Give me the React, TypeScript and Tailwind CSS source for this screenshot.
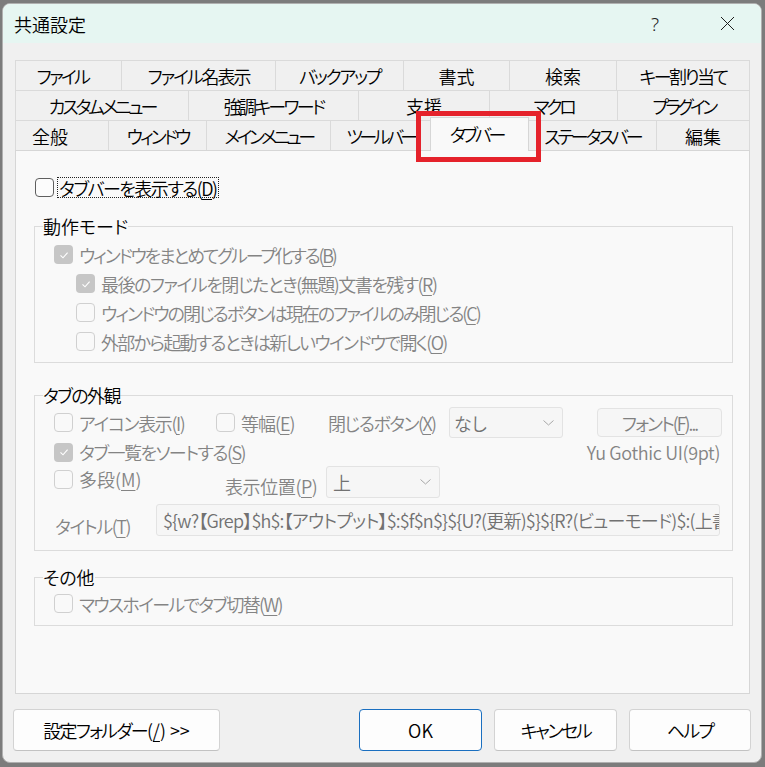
import React from "react";

const FONT =
  "font-['Noto_Sans_CJK_JP','Noto_Sans',sans-serif] [font-feature-settings:'palt'] font-[350]";

function U({ children }: { children: React.ReactNode }) {
  return <span className="underline underline-offset-[3px] decoration-1">{children}</span>;
}

function Check({ checked = false, disabled = false }: { checked?: boolean; disabled?: boolean }) {
  if (checked) {
    return (
      <span className="w-[19px] h-[19px] rounded-[4px] bg-[#c6c6c6] flex items-center justify-center shrink-0">
        <svg width="12" height="12" viewBox="0 0 12 12">
          <polyline points="2.5,6.3 5,8.8 9.6,3.6" fill="none" stroke="#ffffff" strokeWidth="1.1" />
        </svg>
      </span>
    );
  }
  return (
    <span
      className={
        disabled
          ? "w-[19px] h-[19px] rounded-[4px] border border-[#d0d0d0] shrink-0"
          : "w-[19px] h-[19px] rounded-[4px] border border-[#5f5f5f] bg-[#fcfcfc] shrink-0"
      }
    />
  );
}

function CheckRow({
  checked = false,
  children,
  className = "",
  tr = "",
}: {
  checked?: boolean;
  children: React.ReactNode;
  className?: string;
  tr?: string;
}) {
  return (
    <div className={`flex items-center h-[29px] ${className}`}>
      <Check checked={checked} disabled />
      <span className={`ml-[6px] text-[#848484] whitespace-nowrap ${tr}`}>{children}</span>
    </div>
  );
}

function Chevron() {
  return (
    <svg width="11" height="6" viewBox="0 0 11 6" className="shrink-0">
      <polyline points="0.5,0.5 5.5,5 10.5,0.5" fill="none" stroke="#a8a8a8" strokeWidth="1" />
    </svg>
  );
}

function Select({ value, className = "" }: { value: string; className?: string }) {
  return (
    <div
      className={`w-[114px] border border-[#e3e3e3] rounded-[3px] bg-[#f6f6f6] flex items-center pl-[4px] pr-[8px] text-[#727272] shrink-0 ${className}`}
    >
      <span className="flex-1">{value}</span>
      <Chevron />
    </div>
  );
}

type Tab = { t: string; w: string; sel?: boolean; extra?: string };

const row1: Tab[] = [
  { t: "ファイル", w: "w-[106px]", extra: "pr-[12px] tracking-[-2.7px]" },
  { t: "ファイル名表示", w: "w-[154px]", extra: "tracking-[-2.1px]" },
  { t: "バックアップ", w: "w-[128px]", extra: "tracking-[-2.3px]" },
  { t: "書式", w: "w-[106px]" },
  { t: "検索", w: "w-[107px]" },
  { t: "キー割り当て", w: "w-[133px]", extra: "tracking-[-2.5px]" },
];
const row2: Tab[] = [
  { t: "カスタムメニュー", w: "w-[173px]", extra: "tracking-[-3px]" },
  { t: "強調キーワード", w: "w-[170px]", extra: "tracking-[-2.7px]" },
  { t: "支援", w: "w-[131px]" },
  { t: "マクロ", w: "w-[128px]", extra: "tracking-[-3.3px]" },
  { t: "プラグイン", w: "w-[132px]", extra: "tracking-[-3.6px]" },
];
const row3: Tab[] = [
  { t: "全般", w: "w-[93px]", extra: "pr-[24px]" },
  { t: "ウィンドウ", w: "w-[98px]", extra: "tracking-[-3px]" },
  { t: "メインメニュー", w: "w-[124px]", extra: "tracking-[-3.4px]" },
  { t: "ツールバー", w: "w-[100px]", extra: "tracking-[-3.5px]" },
  { t: "タブバー", w: "w-[99px]", sel: true, extra: "tracking-[-3.2px] pr-[6px]" },
  { t: "ステータスバー", w: "w-[128px]", extra: "tracking-[-2.9px]" },
  { t: "編集", w: "w-[93px]" },
];

function TabRow({ tabs, front = false }: { tabs: Tab[]; front?: boolean }) {
  return (
    <div className={`flex h-[30px] border-l border-[#dadada] ${front ? "items-end" : ""}`}>
      {tabs.map((tab) =>
        tab.sel ? (
          <div
            key={tab.t}
            className={`${tab.w} -ml-px h-[34px] -mb-px relative z-10 bg-[#f9f9f9] border-l border-t border-r border-[#d6d6d6] flex items-center justify-center pb-[2px] ${tab.extra ?? ""}`}
          >
            {tab.t}
          </div>
        ) : (
          <div
            key={tab.t}
            className={`${tab.w} h-[30px] border-t border-r border-[#dadada] bg-[#f0f0f0] flex items-center justify-center whitespace-nowrap ${tab.extra ?? ""}`}
          >
            {tab.t}
          </div>
        )
      )}
    </div>
  );
}

function Button({
  children,
  className = "",
  primary = false,
}: {
  children: React.ReactNode;
  className?: string;
  primary?: boolean;
}) {
  return (
    <div
      className={`h-[42px] rounded-[4px] flex items-center justify-center bg-[#fdfdfd] whitespace-pre ${
        primary ? "border border-[#1a6fc0]" : "border border-[#d3d3d3] border-b-[#c2c2c2]"
      } ${className}`}
    >
      {children}
    </div>
  );
}

export default function App() {
  return (
    <div
      className={`relative w-[765px] h-[767px] bg-[#7c7c7c] pt-[3px] pl-[2px] overflow-hidden text-[18px] leading-[22px] text-black ${FONT}`}
    >
      <div className="w-[760px] h-[760px] rounded-[8px] overflow-hidden border border-[#b0b0b0] bg-[#f0f0f0] flex flex-col">
        {/* Title bar */}
        <div className="h-[39px] shrink-0 bg-[#e6f6f2] flex items-center pl-[11px]">
          <span className="flex-1">共通設定</span>
          <span className="w-[30px] text-center font-['Noto_Sans',sans-serif] font-light text-[19px] text-[#222] mr-[34px]">
            ?
          </span>
          <span className="w-[46px] flex items-center justify-center mr-[11px]">
            <svg width="15" height="15" viewBox="0 0 15 15">
              <line x1="1" y1="1" x2="14" y2="14" stroke="#1e1e1e" strokeWidth="1" />
              <line x1="14" y1="1" x2="1" y2="14" stroke="#1e1e1e" strokeWidth="1" />
            </svg>
          </span>
        </div>

        {/* Body */}
        <div className="flex-1 flex flex-col pt-[17px] pl-[12px] pr-[11px]">
          <TabRow tabs={row1} />
          <TabRow tabs={row2} />
          <TabRow tabs={row3} front />

          {/* Panel */}
          <div className="w-[735px] h-[544px] border border-[#d6d6d6] bg-[#f9f9f9] pl-[18px] pr-[16px] pt-[26px]">
            <div className="flex items-center h-[21px] ml-[1px]">
              <Check />
              <span className="ml-[3px] border border-dotted border-[#222] px-[1px] h-[21px] flex items-center whitespace-nowrap tracking-[-1.5px]">
                タブバーを表示する(<U>D</U>)
              </span>
            </div>

            {/* 動作モード */}
            <fieldset className="mt-[17px] border border-[#dcdcdc] w-[699px]">
              <legend className="ml-[8px] leading-[22px]">動作モード</legend>
              <div className="pl-[19px] pt-[3px] pb-[6px]">
                <CheckRow checked tr="tracking-[-2.2px]">
                  ウィンドウをまとめてグループ化する(<U>B</U>)
                </CheckRow>
                <CheckRow checked className="ml-[22px]" tr="tracking-[-1.5px]">
                  最後のファイルを閉じたとき(無題)文書を残す(<U>R</U>)
                </CheckRow>
                <CheckRow className="ml-[22px]" tr="tracking-[-2px]">
                  ウィンドウの閉じるボタンは現在のファイルのみ閉じる(<U>C</U>)
                </CheckRow>
                <CheckRow className="ml-[22px]" tr="tracking-[-1.7px]">
                  外部から起動するときは新しいウインドウで開く(<U>O</U>)
                </CheckRow>
              </div>
            </fieldset>

            {/* タブの外観 */}
            <fieldset className="mt-[21px] border border-[#dcdcdc] w-[699px]">
              <legend className="ml-[8px] leading-[22px] tracking-[-1.6px]">タブの外観</legend>
              <div className="pl-[19px] pt-[1px] pb-[14px] text-[#848484]">
                <div className="flex items-center h-[31px]">
                  <div className="w-[162px] flex items-center shrink-0">
                    <Check disabled />
                    <span className="ml-[6px] whitespace-nowrap tracking-[-1.4px]">
                      アイコン表示(<U>I</U>)
                    </span>
                  </div>
                  <div className="w-[112px] flex items-center shrink-0">
                    <Check disabled />
                    <span className="ml-[6px] whitespace-nowrap tracking-[-1px]">
                      等幅(<U>E</U>)
                    </span>
                  </div>
                  <span className="w-[121px] shrink-0 whitespace-nowrap tracking-[-1.5px]">
                    閉じるボタン(<U>X</U>)
                  </span>
                  <Select value="なし" className="h-[31px]" />
                  <div className="ml-[34px] w-[125px] h-[29px] shrink-0 border border-[#e3e3e3] rounded-[4px] bg-[#f6f6f6] flex items-center justify-center text-[#808080] tracking-[-2px]">
                    フォント(<U>F</U>)...
                  </div>
                </div>
                <div className="flex items-center h-[28px]">
                  <Check checked disabled />
                  <span className="ml-[6px] whitespace-nowrap tracking-[-1.5px]">
                    タブ一覧をソートする(<U>S</U>)
                  </span>
                  <span className="ml-auto mr-[12px] whitespace-nowrap tracking-[-0.35px]">
                    Yu Gothic UI(9pt)
                  </span>
                </div>
                <div className="flex items-center h-[32px]">
                  <div className="w-[171px] flex items-center shrink-0 mb-[6px]">
                    <Check disabled />
                    <span className="ml-[6px] whitespace-nowrap">
                      多段(<U>M</U>)
                    </span>
                  </div>
                  <span className="w-[101px] shrink-0 mt-[8px] whitespace-nowrap tracking-[-0.4px]">
                    表示位置(<U>P</U>)
                  </span>
                  <Select value="上" className="h-[32px] pl-[6px]" />
                </div>
                <div className="flex items-center h-[32px] mt-[6px]">
                  <span className="w-[101px] ml-[1px] shrink-0 mt-[12px] whitespace-nowrap tracking-[-1.4px]">
                    タイトル(<U>T</U>)
                  </span>
                  <div className="w-[564px] h-[32px] shrink-0 border border-[#e3e3e3] rounded-[3px] bg-[#f6f6f6] overflow-hidden whitespace-nowrap pl-[6px] flex items-center text-[#717171] tracking-[-0.8px]">
                    {"${w?【Grep】$h$:【アウトプット】$:$f$n$}${U?(更新)$}${R?(ビューモード)$:(上書き"}
                  </div>
                </div>
              </div>
            </fieldset>

            {/* その他 */}
            <fieldset className="mt-[15px] border border-[#dcdcdc] w-[699px]">
              <legend className="ml-[8px] leading-[22px]">その他</legend>
              <div className="pl-[19px] pt-[1px] pb-[7px]">
                <CheckRow tr="tracking-[-1.7px]">
                  マウスホイールでタブ切替(<U>W</U>)
                </CheckRow>
              </div>
            </fieldset>
          </div>

          {/* Buttons */}
          <div className="flex mt-[15px] -ml-[2px]">
            <Button className="w-[207px]">
              <span className="tracking-[-1.8px]">設定フォルダー</span>
              <span>(<U>/</U>) &gt;&gt;</span>
            </Button>
            <div className="ml-auto flex gap-[12px] mr-[-1px]">
              <Button primary className="w-[123px]">
                OK
              </Button>
              <Button className="w-[123px] tracking-[-2.4px]">キャンセル</Button>
              <Button className="w-[122px] tracking-[-1.7px]">ヘルプ</Button>
            </div>
          </div>
        </div>
      </div>

      {/* Red annotation box */}
      <div className="absolute left-[416px] top-[111px] w-[125px] h-[51px] border-[5px] border-[#e5222b] pointer-events-none" />
    </div>
  );
}
